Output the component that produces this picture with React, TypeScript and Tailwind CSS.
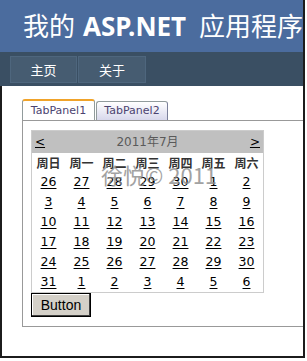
import React from "react";

const weeks: number[][] = [
    [26, 27, 28, 29, 30, 1, 2],
    [3, 4, 5, 6, 7, 8, 9],
    [10, 11, 12, 13, 14, 15, 16],
    [17, 18, 19, 20, 21, 22, 23],
    [24, 25, 26, 27, 28, 29, 30],
    [31, 1, 2, 3, 4, 5, 6],
];

const dayNames = ["周日", "周一", "周二", "周三", "周四", "周五", "周六"];

function Calendar() {
    return (
        <div className="w-[233px] border border-[#cccccc] bg-white" style={{fontFamily: '"DejaVu Sans", "Noto Sans CJK SC", sans-serif'}}>
            {/* title row */}
            <div className="flex h-[22px] items-center justify-between bg-[#c0c0c0] px-[3px] text-[12px]">
                <span className="text-black underline">&lt;</span>
                <span className="text-[#5a5a5a]">2011年7月</span>
                <span className="text-black underline">&gt;</span>
            </div>
            <div className="grid h-[19px] grid-cols-7 items-center text-[12px] font-bold text-[#333333]" style={{fontFamily: '"Noto Sans CJK SC", sans-serif'}}>
                {dayNames.map((d) => (
                    <div key={d} className="text-center leading-none">{d}</div>
                ))}
            </div>
            {weeks.map((w, i) => (
                <div key={i} className="grid h-[20px] grid-cols-7 items-center text-[12.5px]">
                    {w.map((n, j) => (
                        <div key={j} className="text-center leading-none">
                            <span className="text-black underline underline-offset-2">{n}</span>
                        </div>
                    ))}
                </div>
            ))}
        </div>
    );
}

export default function App() {
    return (
        <div className="h-[361px] w-[307px] bg-white">
            <div className="flex h-[358px] w-[305px] flex-col border-r-2 border-[#1c1c1c]">
                {/* header */}
                <div className="flex h-[52px] items-center overflow-hidden whitespace-nowrap bg-[#4b6c9e] pl-[23px] text-[26px] text-white" style={{fontFamily: '"Noto Sans", "Noto Sans CJK SC", sans-serif'}}>
                    <span>我的</span>
                    <span className="ml-[8px] mr-[13px] font-bold">ASP.NET</span>
                    <span>应用程序</span>
                </div>
                {/* menu */}
                <div className="flex h-[34px] items-start bg-[#3a4f63] pl-[10px] pt-[4px] text-[13px] text-white" style={{fontFamily: '"Noto Sans CJK SC", sans-serif'}}>
                    <div className="flex h-[27px] w-[67px] items-center justify-center border border-[#4e667d] bg-[#465c71]">主页</div>
                    <div className="ml-px flex h-[27px] w-[68px] items-center justify-center border border-[#4e667d] bg-[#465c71]">关于</div>
                </div>
                {/* body */}
                <div className="flex-1 overflow-hidden border-b-2 border-l-2 border-[#1c1c1c] pt-[13px]">
                    <div className="ml-[20px] w-[320px]">
                        <div className="flex items-end text-[11px] text-[#4b4370]" style={{fontFamily: '"DejaVu Sans", sans-serif'}}>
                            <div className="flex h-[21px] w-[73px] items-center justify-center rounded-t-[3px] border-x border-t-2 border-x-[#919b9c] border-t-[#f0a32a] bg-white pt-[1px]">
                                TabPanel1
                            </div>
                            <div className="ml-px flex h-[19px] w-[72px] items-center justify-center rounded-t-[3px] border-x border-t border-l-[#919b9c] border-r-[#7a7f9a] border-t-[#919b9c] bg-gradient-to-b from-white to-[#d8d8ec]">
                                TabPanel2
                            </div>
                        </div>
                        <div className="relative h-[207px] border border-[#999999] bg-white pl-[8px] pt-[9px]">
                            <Calendar/>
                            <div className="absolute left-[78px] top-[42px] whitespace-nowrap text-[22px] leading-none text-[#8c8c8c] opacity-80" style={{fontFamily: '"Noto Sans CJK SC", "DejaVu Sans", sans-serif'}}>
                                徐悦© 2011
                            </div>
                            <button className="flex h-[24px] w-[60px] items-center justify-center border border-black bg-[#d4d0c8] text-[14px] text-black shadow-[inset_-1px_-1px_0_#404040,inset_1px_1px_0_#ffffff]" style={{fontFamily: '"Liberation Sans", sans-serif'}}>
                                Button
                            </button>
                        </div>
                    </div>
                </div>
            </div>
        </div>
    );
}
